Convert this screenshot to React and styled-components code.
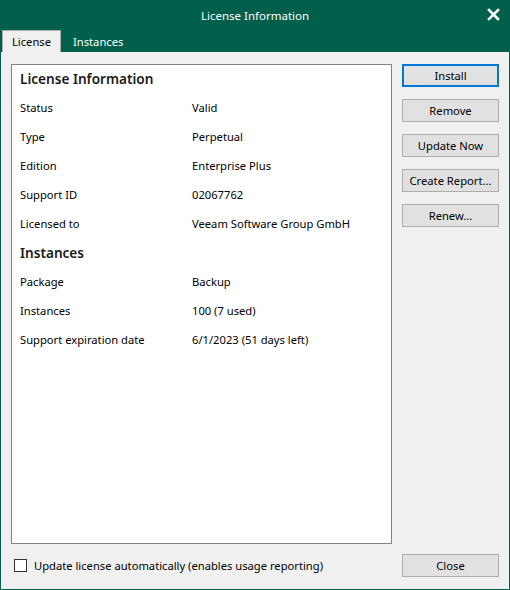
import React from "react";
import styled, { createGlobalStyle } from "styled-components";

const Global = createGlobalStyle`
  html, body { margin: 0; padding: 0; background: #f0f0f0; }
  * { box-sizing: border-box; }
  body { font-family: "Segoe UI", "Noto Sans", "Open Sans", sans-serif; font-size: 11.2px; color: #000; }
`;

const Window = styled.div`
  width: 510px;
  height: 590px;
  border: 1px solid #00604b;
  border-top: none;
  display: flex;
  flex-direction: column;
  background: #f0f0f0;
`;

const TitleBar = styled.div`
  height: 29px;
  background: #00604b;
  color: #fff;
  display: flex;
  align-items: center;
  justify-content: center;
  position: relative;
  font-size: 11.5px;
  padding-top: 1px;
`;

const CloseX = styled.div`
  position: absolute;
  right: 9px;
  top: 8px;
  width: 13px;
  height: 13px;
  display: flex;
`;

const TabBar = styled.div`
  height: 23px;
  background: #00604b;
  display: flex;
  align-items: flex-end;
  padding-left: 1px;
`;

const Tab = styled.div`
  height: 22px;
  padding: 0 ${p => (p.$active ? "9px" : "11px")};
  display: flex;
  align-items: center;
  color: ${p => (p.$active ? "#000" : "#fff")};
  background: ${p => (p.$active ? "#f0f0f0" : "transparent")};
  border: 1px solid ${p => (p.$active ? "#adadad" : "transparent")};
  border-bottom: none;
`;

const Body = styled.div`
  flex: 1;
  display: flex;
  flex-direction: column;
  padding: 12px 10px 12px 10px;
`;

const Main = styled.div`
  flex: 1;
  display: flex;
  gap: 10px;
`;

const Panel = styled.div`
  width: 381px;
  height: 480px;
  background: #fff;
  border: 1px solid #828282;
  padding: 0 8px;
`;

const Heading = styled.div`
  font-size: 13.6px;
  font-weight: 600;
  height: 29px;
  padding-bottom: 2px;
  display: flex;
  align-items: center;
  color: #1a1a1a;
`;

const Row = styled.div`
  display: grid;
  grid-template-columns: 172px 1fr;
  height: 29px;
  padding-bottom: 2px;
  align-items: center;
`;

const Buttons = styled.div`
  display: flex;
  flex-direction: column;
  gap: 12px;
`;

const Button = styled.div`
  width: 97px;
  height: 23px;
  background: #e1e1e1;
  border: ${p => (p.$focus ? "2px solid #0078d7" : "1px solid #adadad")};
  display: flex;
  align-items: center;
  justify-content: center;
`;

const Footer = styled.div`
  display: flex;
  align-items: center;
  justify-content: space-between;
  padding-left: 3px;
  height: 24px;
`;

const CheckLabel = styled.label`
  display: flex;
  align-items: center;
  gap: 7px;
`;

const Box = styled.span`
  width: 13px;
  height: 13px;
  border: 1px solid #333;
  background: #fff;
`;

const rows1 = [
  ["Status", "Valid"],
  ["Type", "Perpetual"],
  ["Edition", "Enterprise Plus"],
  ["Support ID", "02067762"],
  ["Licensed to", "Veeam Software Group GmbH"],
];
const rows2 = [
  ["Package", "Backup"],
  ["Instances", "100 (7 used)"],
  ["Support expiration date", "6/1/2023 (51 days left)"],
];

export default function App() {
  return (
    <>
      <Global />
      <Window>
        <TitleBar>
          License Information
          <CloseX>
            <svg width="13" height="13" viewBox="0 0 13 13">
              <path d="M2 2 L11 11 M11 2 L2 11" stroke="#fff" strokeWidth="2.6" strokeLinecap="square" />
            </svg>
          </CloseX>
        </TitleBar>
        <TabBar>
          <Tab $active>License</Tab>
          <Tab>Instances</Tab>
        </TabBar>
        <Body>
          <Main>
            <Panel>
              <Heading>License Information</Heading>
              {rows1.map(([k, v]) => (
                <Row key={k}><span>{k}</span><span>{v}</span></Row>
              ))}
              <Heading>Instances</Heading>
              {rows2.map(([k, v]) => (
                <Row key={k}><span>{k}</span><span>{v}</span></Row>
              ))}
            </Panel>
            <Buttons>
              <Button $focus>Install</Button>
              <Button>Remove</Button>
              <Button>Update Now</Button>
              <Button>Create Report...</Button>
              <Button>Renew...</Button>
            </Buttons>
          </Main>
          <Footer>
            <CheckLabel><Box />Update license automatically (enables usage reporting)</CheckLabel>
            <Button>Close</Button>
          </Footer>
        </Body>
      </Window>
    </>
  );
}
